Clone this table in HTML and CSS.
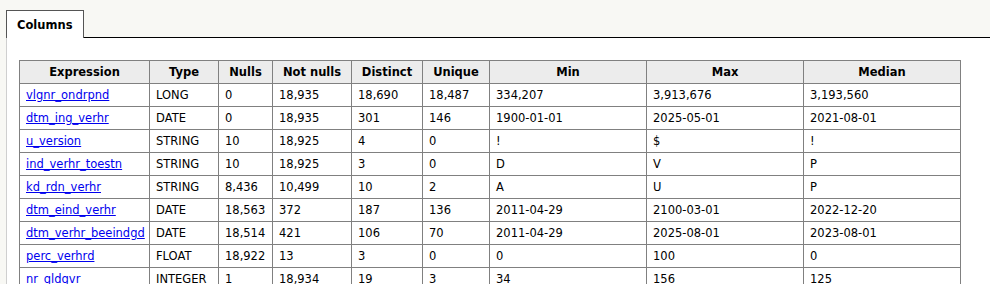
FILE: index.html
```html
<!DOCTYPE html>
<html>
<head>
<meta charset="utf-8">
<link rel="stylesheet" href="styles.css">
</head>
<body>
<div class="tabs">
  <div class="tab">Columns</div>
  <div class="tab-rest"></div>
</div>
<div class="panel">
  <table class="cols">
    <colgroup>
      <col class="c-expr"><col class="c-type"><col class="c-nulls"><col class="c-notnulls"><col class="c-distinct"><col class="c-unique"><col class="c-wide"><col class="c-wide"><col class="c-wide">
    </colgroup>
    <thead>
      <tr><th>Expression</th><th>Type</th><th>Nulls</th><th>Not nulls</th><th>Distinct</th><th>Unique</th><th>Min</th><th>Max</th><th>Median</th></tr>
    </thead>
    <tbody>
      <tr><td><a href="#">vlgnr_ondrpnd</a></td><td>LONG</td><td>0</td><td>18,935</td><td>18,690</td><td>18,487</td><td>334,207</td><td>3,913,676</td><td>3,193,560</td></tr>
      <tr><td><a href="#">dtm_ing_verhr</a></td><td>DATE</td><td>0</td><td>18,935</td><td>301</td><td>146</td><td>1900-01-01</td><td>2025-05-01</td><td>2021-08-01</td></tr>
      <tr><td><a href="#">u_version</a></td><td>STRING</td><td>10</td><td>18,925</td><td>4</td><td>0</td><td>!</td><td>$</td><td>!</td></tr>
      <tr><td><a href="#">ind_verhr_toestn</a></td><td>STRING</td><td>10</td><td>18,925</td><td>3</td><td>0</td><td>D</td><td>V</td><td>P</td></tr>
      <tr><td><a href="#">kd_rdn_verhr</a></td><td>STRING</td><td>8,436</td><td>10,499</td><td>10</td><td>2</td><td>A</td><td>U</td><td>P</td></tr>
      <tr><td><a href="#">dtm_eind_verhr</a></td><td>DATE</td><td>18,563</td><td>372</td><td>187</td><td>136</td><td>2011-04-29</td><td>2100-03-01</td><td>2022-12-20</td></tr>
      <tr><td><a href="#">dtm_verhr_beeindgd</a></td><td>DATE</td><td>18,514</td><td>421</td><td>106</td><td>70</td><td>2011-04-29</td><td>2025-08-01</td><td>2023-08-01</td></tr>
      <tr><td><a href="#">perc_verhrd</a></td><td>FLOAT</td><td>18,922</td><td>13</td><td>3</td><td>0</td><td>0</td><td>100</td><td>0</td></tr>
      <tr><td><a href="#">nr_gldgvr</a></td><td>INTEGER</td><td>1</td><td>18,934</td><td>19</td><td>3</td><td>34</td><td>156</td><td>125</td></tr>
    </tbody>
  </table>
</div>
</body>
</html>
```
FILE: styles.css
```css
html, body {
  margin: 0;
  padding: 0;
  background: #f8f8f4;
  font-family: "DejaVu Sans", Verdana, sans-serif;
  font-size: 11.5px;
  color: #000;
  overflow: hidden;
}
.tabs {
  display: flex;
  align-items: flex-end;
  padding: 10px 0 0 6px;
}
.tab {
  box-sizing: border-box;
  width: 78px;
  height: 28px;
  border: 1px solid #555;
  border-bottom: none;
  background: #fff;
  font-weight: bold;
  padding: 8px 0 0 10px;
  line-height: 13px;
}
.tab-rest {
  flex: 1;
  border-bottom: 1px solid #000;
}
.panel {
  margin-left: 6px;
  border-left: 1px solid #cfcfcf;
  background: #fff;
  padding: 22px 12px 40px 12px;
}
.cols {
  border-collapse: collapse;
  table-layout: fixed;
  width: 942px;
}
.c-expr { width: 130px; }
.c-type { width: 69px; }
.c-nulls { width: 54px; }
.c-notnulls { width: 79px; }
.c-distinct { width: 71px; }
.c-unique { width: 67px; }
.c-wide { width: 157px; }
.cols th, .cols td {
  border: 1px solid #808080;
  padding: 4px 6px;
  line-height: 14px;
  white-space: nowrap;
  overflow: hidden;
}
.cols th {
  background: #ececec;
  font-weight: bold;
  text-align: center;
}
.cols td {
  text-align: left;
}
.cols a {
  color: #0000ee;
  text-decoration: underline;
}
```
